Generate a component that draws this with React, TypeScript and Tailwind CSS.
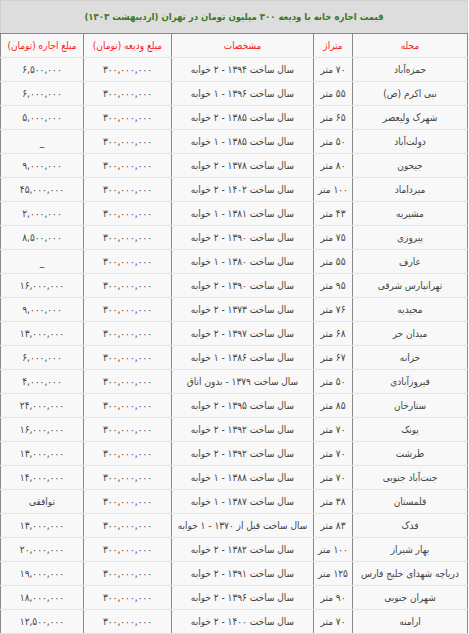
import React from "react";

const rows: [string, string, string, string][] = [
  ["حمزه‌آباد", "۷۰ متر", "سال ساخت ۱۳۹۴ - ۲ خوابه", "۶,۵۰۰,۰۰۰"],
  ["نبی اکرم (ص)", "۵۵ متر", "سال ساخت ۱۳۹۶ - ۱ خوابه", "۶,۰۰۰,۰۰۰"],
  ["شهرک ولیعصر", "۶۵ متر", "سال ساخت ۱۳۸۵ - ۲ خوابه", "۵,۰۰۰,۰۰۰"],
  ["دولت‌آباد", "۵۰ متر", "سال ساخت ۱۳۸۵ - ۱ خوابه", "_"],
  ["جیحون", "۸۰ متر", "سال ساخت ۱۳۷۸ - ۲ خوابه", "۹,۰۰۰,۰۰۰"],
  ["میرداماد", "۱۰۰ متر", "سال ساخت ۱۴۰۲ - ۲ خوابه", "۴۵,۰۰۰,۰۰۰"],
  ["مشیریه", "۴۳ متر", "سال ساخت ۱۳۸۱ - ۱ خوابه", "۲,۰۰۰,۰۰۰"],
  ["پیروزی", "۷۵ متر", "سال ساخت ۱۳۹۰ - ۲ خوابه", "۸,۵۰۰,۰۰۰"],
  ["عارف", "۵۵ متر", "سال ساخت ۱۳۸۰ - ۱ خوابه", "_"],
  ["تهرانپارس شرقی", "۹۵ متر", "سال ساخت ۱۳۹۰ - ۲ خوابه", "۱۶,۰۰۰,۰۰۰"],
  ["مجیدیه", "۷۶ متر", "سال ساخت ۱۳۷۳ - ۲ خوابه", "۹,۰۰۰,۰۰۰"],
  ["میدان حر", "۶۸ متر", "سال ساخت ۱۳۹۷ - ۲ خوابه", "۱۳,۰۰۰,۰۰۰"],
  ["خزانه", "۶۷ متر", "سال ساخت ۱۳۸۶ - ۱ خوابه", "۶,۰۰۰,۰۰۰"],
  ["فیروزآبادی", "۵۰ متر", "سال ساخت ۱۳۷۹ - بدون اتاق", "۴,۰۰۰,۰۰۰"],
  ["ستارخان", "۸۵ متر", "سال ساخت ۱۳۹۵ - ۲ خوابه", "۲۴,۰۰۰,۰۰۰"],
  ["پونک", "۷۰ متر", "سال ساخت ۱۳۹۲ - ۲ خوابه", "۱۶,۰۰۰,۰۰۰"],
  ["طرشت", "۷۰ متر", "سال ساخت ۱۳۹۲ - ۲ خوابه", "۱۳,۰۰۰,۰۰۰"],
  ["جنت‌آباد جنوبی", "۷۰ متر", "سال ساخت ۱۳۸۸ - ۱ خوابه", "۱۴,۰۰۰,۰۰۰"],
  ["قلمستان", "۳۸ متر", "سال ساخت ۱۳۸۷ - ۱ خوابه", "توافقی"],
  ["فدک", "۸۳ متر", "سال ساخت قبل از ۱۳۷۰ - ۱ خوابه", "۱۳,۰۰۰,۰۰۰"],
  ["بهار شیراز", "۱۰۰ متر", "سال ساخت ۱۳۸۲ - ۲ خوابه", "۲۰,۰۰۰,۰۰۰"],
  ["دریاچه شهدای خلیج فارس", "۱۲۵ متر", "سال ساخت ۱۳۹۱ - ۲ خوابه", "۱۹,۰۰۰,۰۰۰"],
  ["شهران جنوبی", "۹۰ متر", "سال ساخت ۱۳۹۶ - ۲ خوابه", "۱۸,۰۰۰,۰۰۰"],
  ["ارامنه", "۷۰ متر", "سال ساخت ۱۴۰۰ - ۲ خوابه", "۱۲,۵۰۰,۰۰۰"],
];

const cell =
  "h-[24px] p-0 text-center align-middle whitespace-nowrap overflow-hidden border-x border-x-[#8a8a8a] border-b border-b-[#e4e4e4]";

export default function App() {
  return (
    <div className="w-[469px] h-[634px] bg-white" style={{ fontFamily: '"DejaVu Sans Condensed", "DejaVu Sans", sans-serif' }}>
      <table dir="rtl" className="w-[467px] table-fixed border-collapse text-[10px] text-[#444] bg-[#f8f8f8]">
        <colgroup>
          <col className="w-[115px]" />
          <col className="w-[39px]" />
          <col className="w-[142px]" />
          <col className="w-[88px]" />
          <col className="w-[83px]" />
        </colgroup>
        <thead>
          <tr>
            <th
              colSpan={5}
              className="h-[33px] p-0 bg-[#dddddd] text-[#3b7a22] font-bold text-[9.5px] text-center border border-[#d0d0d0] border-b-[#8a8a8a]"
            >
              قیمت اجاره خانه با ودیعه ۳۰۰ میلیون تومان در تهران (اردیبهشت ۱۴۰۳)
            </th>
          </tr>
          <tr className="text-[#ff1a1a] font-normal">
            <th className={cell + " font-normal"}>محله</th>
            <th className={cell + " font-normal"}>متراژ</th>
            <th className={cell + " font-normal"}>مشخصات</th>
            <th className={cell + " font-normal"}>مبلغ ودیعه (تومان)</th>
            <th className={cell + " font-normal"}>مبلغ اجاره (تومان)</th>
          </tr>
        </thead>
        <tbody>
          {rows.map((r, i) => (
            <tr key={i}>
              <td className={cell}>{r[0]}</td>
              <td className={cell}>{r[1]}</td>
              <td className={cell}>{r[2]}</td>
              <td className={cell}>۳۰۰,۰۰۰,۰۰۰</td>
              <td className={cell}>{r[3]}</td>
            </tr>
          ))}
        </tbody>
      </table>
    </div>
  );
}
